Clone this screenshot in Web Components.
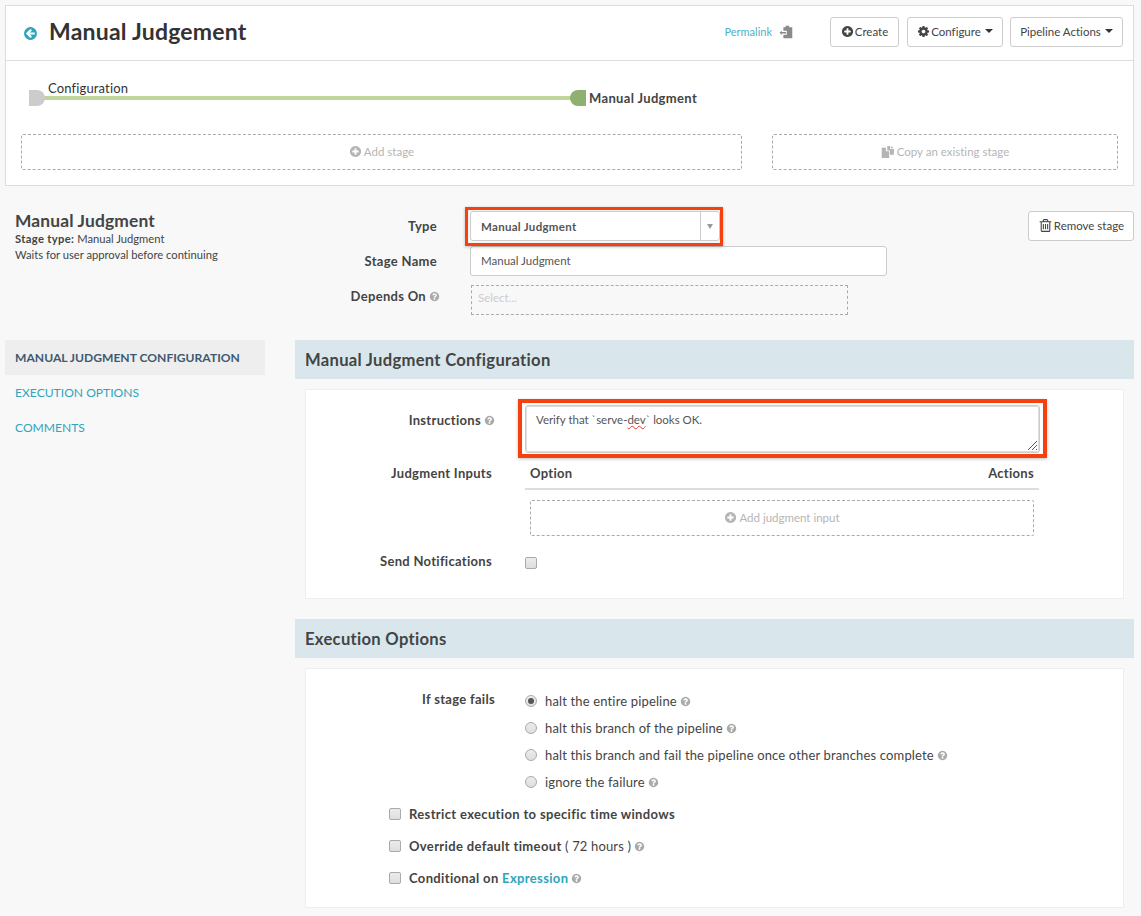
<!doctype html>
<html>
<head>
<meta charset="utf-8">
<title>Manual Judgement</title>
<style>
  html, body { margin: 0; padding: 0; background: #f8f8f8; }
  body { font-family: Lato, "Liberation Sans", sans-serif; font-size: 13px; color: #444; font-variant-ligatures: none; letter-spacing: .15px; }
</style>
</head>
<body>
<stage-page></stage-page>
<script>
const PATHS = {
  plus: 'M1344 960v-128q0-26-19-45t-45-19h-256v-256q0-26-19-45t-45-19h-128q-26 0-45 19t-19 45v256h-256q-26 0-45 19t-19 45v128q0 26 19 45t45 19h256v256q0 26 19 45t45 19h128q26 0 45-19t19-45v-256h256q26 0 45-19t19-45zm320-64q0 209-103 385.5t-279.5 279.5-385.5 103-385.5-103-279.5-279.5-103-385.5 103-385.5 279.5-279.5 385.5-103 385.5 103 279.5 279.5 103 385.5z',
  cog: 'M1152 896q0-106-75-181t-181-75-181 75-75 181 75 181 181 75 181-75 75-181zm512-109v222q0 12-8 23t-20 13l-185 28q-19 54-39 91 35 50 107 138 10 12 10 25t-9 23q-27 37-99 108t-94 71q-12 0-26-9l-138-108q-44 23-91 38-16 136-29 186-7 28-36 28h-222q-14 0-24.5-8.5t-11.5-21.5l-28-184q-49-16-90-37l-141 107q-10 9-25 9-14 0-25-11-126-114-165-168-7-10-7-23 0-12 8-23 15-21 51-66.5t54-70.5q-27-50-41-99l-183-27q-13-2-21-12.5t-8-23.5v-222q0-12 8-23t19-13l186-28q14-46 39-92-40-57-107-138-10-12-10-24 0-10 9-23 26-36 98.5-107.5t94.5-71.5q13 0 26 10l138 107q44-23 91-38 16-136 29-186 7-28 36-28h222q14 0 24.5 8.5t11.5 21.5l28 184q49 16 90 37l142-107q9-9 24-9 13 0 25 10 129 119 165 170 7 8 7 22 0 12-8 23-15 21-51 66.5t-54 70.5q26 50 41 98l183 28q13 2 21 12.5t8 23.5z',
  help: 'M1024 1376v-192q0-14-9-23t-23-9h-192q-14 0-23 9t-9 23v192q0 14 9 23t23 9h192q14 0 23-9t9-23zm256-672q0-88-55.5-163t-138.5-116-170-41q-243 0-371 213-15 24 8 42l132 100q7 6 19 6 16 0 25-12 53-68 86-92 34-24 86-24 48 0 85.5 26t37.5 59q0 38-20 61t-68 45q-63 28-115.5 86.5t-52.5 125.5v36q0 14 9 23t23 9h192q14 0 23-9t9-23q0-19 21.5-49.5t54.5-49.5q32-18 49-28.5t46-35 44.5-48 28-60.5 12.5-81zm384 192q0 209-103 385.5t-279.5 279.5-385.5 103-385.5-103-279.5-279.5-103-385.5 103-385.5 279.5-279.5 385.5-103 385.5 103 279.5 279.5 103 385.5z',
  back: 'M1408 960v-128q0-26-18.5-45t-45.5-19h-502l189-189q19-19 19-45t-19-45l-91-91q-18-18-45-18t-45 18l-362 362-91 91q-18 18-18 45t18 45l91 91 362 362q18 18 45 18t45-18l91-91q18-18 18-45t-18-45l-189-189h502q27 0 45.5-19t18.5-45zm256-64q0 209-103 385.5t-279.5 279.5-385.5 103-385.5-103-279.5-279.5-103-385.5 103-385.5 279.5-279.5 385.5-103 385.5 103 279.5 279.5 103 385.5z',
  trash: 'M704 736v576q0 14-9 23t-23 9h-64q-14 0-23-9t-9-23v-576q0-14 9-23t23-9h64q14 0 23 9t9 23zm256 0v576q0 14-9 23t-23 9h-64q-14 0-23-9t-9-23v-576q0-14 9-23t23-9h64q14 0 23 9t9 23zm256 0v576q0 14-9 23t-23 9h-64q-14 0-23-9t-9-23v-576q0-14 9-23t23-9h64q14 0 23 9t9 23zm128 724v-948h-896v948q0 22 7 40.5t14.5 27 10.5 8.5h832q3 0 10.5-8.5t14.5-27 7-40.5zm-672-1076h448l-48-117q-7-9-17-11h-317q-10 2-17 11zm928 32v64q0 14-9 23t-23 9h-96v948q0 83-47 143.5t-113 60.5h-832q-66 0-113-58.5t-47-141.5v-952h-96q-14 0-23-9t-9-23v-64q0-14 9-23t23-9h309l70-167q15-37 54-63t79-26h320q40 0 79 26t54 63l70 167h309q14 0 23 9t9 23z',
  copy: 'M90 350H640V800H1050V1650H90ZM800 130H1150V520H1650V1250H1150V700H800ZM1250 130 1650 430H1250Z',
  clip: 'M560 280H850V90H1300V280H1700V1700H560V1250H1000V750H560ZM60 1000 360 750V900H900V1100H360V1250Z'
}

class UiIcon extends HTMLElement {
  connectedCallback() {
    const size = this.getAttribute('size') || 12
    this.attachShadow({ mode: 'open' }).innerHTML = `<style>
      :host { display: inline-flex; color: inherit; }
      svg { display: block; width: ${size}px; height: ${size}px; fill: currentColor; }
    </style><svg viewBox="0 0 1792 1792"><path fill-rule="evenodd" d="${PATHS[this.getAttribute('name')]}"/></svg>`
  }
}
customElements.define('ui-icon', UiIcon)

class HelpTip extends HTMLElement {
  constructor() {
    super()
    this.attachShadow({ mode: 'open' }).innerHTML = `<style>
      :host { display: inline-flex; vertical-align: -1px; margin-left: 3px; color: #aaa; }
    </style><ui-icon name="help" size="11"></ui-icon>`
  }
}
customElements.define('help-tip', HelpTip)

class UiButton extends HTMLElement {
  constructor() {
    super()
    this.attachShadow({ mode: 'open' }).innerHTML = `<style>
      :host { display: inline-flex; align-items: center; justify-content: center; box-sizing: border-box;
        height: 30px; padding-bottom: 1px; background: #fff; border: 1px solid #ccc; border-radius: 3px; font-size: 11.5px; letter-spacing: 0; color: #444; gap: 1px; }
      .caret { width: 0; height: 0; border: 4px solid transparent; border-top-color: #333; border-bottom: 0; margin-left: 3px; }
      :host(:not([caret])) .caret { display: none; }
    </style><slot></slot><span class="caret"></span>`
  }
}
customElements.define('ui-button', UiButton)

class DashButton extends HTMLElement {
  constructor() {
    super()
    this.attachShadow({ mode: 'open' }).innerHTML = `<style>
      :host { display: flex; align-items: center; justify-content: center; gap: 2px; box-sizing: border-box;
        height: 36px; padding-bottom: 1px; border: 1px dashed #aaa; border-radius: 2px; color: #b5b5b5; font-size: 11.5px; letter-spacing: 0; }
    </style><slot></slot>`
  }
}
customElements.define('dash-button', DashButton)

class PipelineHeader extends HTMLElement {
  constructor() {
    super()
    this.attachShadow({ mode: 'open' }).innerHTML = `<style>
      :host { display: block; box-sizing: border-box; margin: 5px 7px 0 5px; height: 181px; background: #fff; border: 1px solid #ddd; }
      .top { display: flex; align-items: center; box-sizing: border-box; height: 55px; padding: 0 10px 3px 17px; border-bottom: 1px solid #ddd; }
      .back { color: #2fa4bd; display: flex; margin-right: 11px; margin-top: 3px; }
      h1 { margin: -2px 0 0; font-size: 23px; font-weight: 700; letter-spacing: .22px; color: #333; flex: 1; line-height: 30px; }
      .perma { color: #4eb0c6; font-size: 11px; letter-spacing: 0; margin-right: 7px; }
      .clip { color: #8a8a8a; display: flex; margin-right: 37px; }
      .btns { display: flex; }
      .create { width: 69px; margin-right: 8px; } .conf { width: 96px; margin-right: 7px; } .acts { width: 113px; }
      .graph { position: relative; height: 73px; }
      .start { position: absolute; left: 23px; top: 29px; width: 16px; height: 16px; background: #ccc; border-radius: 0 8px 8px 0; }
      .line { position: absolute; left: 38px; top: 35px; width: 527px; height: 4px; background: #bfd59a; }
      .end { position: absolute; left: 564px; top: 29px; width: 16px; height: 16px; background: #8fb06e; border-radius: 8px 0 0 8px; }
      .l1 { position: absolute; left: 42px; top: 19px; font-size: 13px; color: #333; line-height: 16px; }
      .l2 { position: absolute; left: 583px; top: 29px; font-size: 13px; font-weight: 700; letter-spacing: .35px; color: #444; line-height: 16px; }
      .adds { display: flex; gap: 30px; padding: 0 15px; }
      .adds dash-button:first-child { width: 721px; }
      .adds dash-button:last-child { width: 346px; }
    </style>
    <div class="top">
      <span class="back"><ui-icon name="back" size="15"></ui-icon></span>
      <h1>Manual Judgement</h1>
      <span class="perma">Permalink</span>
      <span class="clip"><ui-icon name="clip" size="14"></ui-icon></span>
      <div class="btns">
        <ui-button class="create"><ui-icon name="plus" size="13"></ui-icon>Create</ui-button>
        <ui-button class="conf" caret><ui-icon name="cog" size="13"></ui-icon>Configure</ui-button>
        <ui-button class="acts" caret>Pipeline Actions</ui-button>
      </div>
    </div>
    <div class="graph">
      <div class="line"></div><div class="start"></div><div class="end"></div>
      <div class="l1">Configuration</div>
      <div class="l2">Manual Judgment</div>
    </div>
    <div class="adds">
      <dash-button><ui-icon name="plus" size="13"></ui-icon>Add stage</dash-button>
      <dash-button><ui-icon name="copy" size="14"></ui-icon>Copy an existing stage</dash-button>
    </div>`
  }
}
customElements.define('pipeline-header', PipelineHeader)

class StageSummary extends HTMLElement {
  constructor() {
    super()
    this.attachShadow({ mode: 'open' }).innerHTML = `<style>
      :host { display: grid; grid-template-columns: 432px 250px 1fr; height: 154px; box-sizing: border-box; padding: 25px 7px 0 15px; }
      .info { grid-column: 1; grid-row: 1; z-index: 1; width: 300px; }
      .info h2 { margin: 0; font-size: 17.4px; font-weight: 700; color: #444; line-height: 20px; }
      .info div { font-size: 11.2px; line-height: 16px; letter-spacing: 0; color: #444; }
      .info b { letter-spacing: .35px; }
      .stack { grid-column: 1 / 3; grid-row: 1; display: grid; grid-template-columns: 455px 1fr; grid-auto-rows: 35px; }
      .lbl { box-sizing: border-box; padding-right: 33px; text-align: right; font-weight: 700; letter-spacing: .3px; color: #444; line-height: 30px; font-size: 13px; }
      .dep { padding-right: 30px; }
      .sel { box-sizing: border-box; width: 250px; height: 30px; background: #fff; border: 1px solid #ccc; border-radius: 3px; display: flex; align-items: center; position: relative; font-size: 11.5px; font-weight: 700; letter-spacing: .3px; color: #555; padding-left: 10px; }
      .sel::after { content: ""; position: absolute; top: -5px; right: -4px; bottom: -6px; left: -6px; border: 3px solid #f5400f; box-shadow: 0 1px 3px rgba(0,0,0,.25), inset 0 0 1px rgba(0,0,0,.2); }
      .sel .arrow { position: absolute; right: 0; top: 0; bottom: 0; width: 18px; border-left: 1px solid #ccc; display: flex; align-items: center; justify-content: center; }
      .sel .arrow i { width: 0; height: 0; border: 3px solid transparent; border-top: 5px solid #999; border-bottom: 0; }
      .inp { box-sizing: border-box; width: 417px; height: 30px; background: #fff; border: 1px solid #ccc; border-radius: 3px; font-size: 11.5px; letter-spacing: 0; color: #555; padding-left: 10px; line-height: 28px; }
      .ph { box-sizing: border-box; margin: 4px 0 0 1px; width: 377px; height: 30px; border: 1px dashed #aaa; font-size: 11.5px; letter-spacing: 0; color: #ccc; padding-left: 6px; line-height: 24px; }
      .side { grid-column: 3; grid-row: 1; justify-self: end; }
      .side ui-button { width: 106px; }
    </style>
    <div class="info">
      <h2>Manual Judgment</h2>
      <div><b>Stage type:</b> Manual Judgment</div>
      <div>Waits for user approval before continuing</div>
    </div>
    <div class="stack">
      <div class="lbl">Type</div><div class="sel">Manual Judgment<span class="arrow"><i></i></span></div>
      <div class="lbl">Stage Name</div><div class="inp">Manual Judgment</div>
      <div class="lbl dep">Depends On<help-tip></help-tip></div><div class="ph">Select...</div>
    </div>
    <div class="side"><ui-button><ui-icon name="trash" size="15"></ui-icon>Remove stage</ui-button></div>`
  }
}
customElements.define('stage-summary', StageSummary)

class SideNav extends HTMLElement {
  constructor() {
    super()
    this.attachShadow({ mode: 'open' }).innerHTML = `<style>
      :host { display: block; width: 260px; margin-left: 5px; font-size: 12.1px; letter-spacing: 0; }
      div { height: 35px; line-height: 35px; padding-left: 10px; color: #2fa4bd; }
      .on { background: #eee; color: #3e5a72; font-weight: 700; }
    </style>
    <div class="on">MANUAL JUDGMENT CONFIGURATION</div>
    <div>EXECUTION OPTIONS</div>
    <div>COMMENTS</div>`
  }
}
customElements.define('side-nav', SideNav)

class ConfigSection extends HTMLElement {
  constructor() {
    super()
    this.attachShadow({ mode: 'open' }).innerHTML = `<style>
      :host { display: block; }
      h3 { margin: 0; height: 39px; line-height: 40px; padding-left: 10px; background: #d9e7ec; font-size: 16.6px; letter-spacing: .3px; font-weight: 700; color: #444; }
      .panel { box-sizing: border-box; margin: 10px 10px 0; background: #fff; border: 1px solid #eee; height: var(--panel-height); }
    </style>
    <h3></h3><div class="panel"><slot></slot></div>`
    this.shadowRoot.querySelector('h3').textContent = this.getAttribute('heading')
  }
}
customElements.define('config-section', ConfigSection)

class TickBox extends HTMLElement {
  constructor() {
    super()
    this.attachShadow({ mode: 'open' }).innerHTML = `<style>
      :host { display: block; box-sizing: border-box; width: 12px; height: 12px; flex: none; background: linear-gradient(#ececec, #dedede); border: 1px solid #aaa; border-radius: 2px; }
      :host([round]) { border-radius: 50%; position: relative; }
      :host([checked])::after { content: ""; position: absolute; left: 2px; top: 2px; width: 6px; height: 6px; border-radius: 50%; background: #555; }
    </style>`
  }
}
customElements.define('tick-box', TickBox)

class JudgmentForm extends HTMLElement {
  constructor() {
    super()
    this.attachShadow({ mode: 'open' }).innerHTML = `<style>
      :host { display: grid; grid-template-columns: 186px 1fr; column-gap: 33px; padding-top: 15px; width: 733px; font-size: 13px; }
      .lbl { text-align: right; font-weight: 700; letter-spacing: .3px; color: #444; line-height: 30px; }
      .first { margin-right: -3px; }
      .ta { box-sizing: border-box; width: 515px; height: 48px; background: #fff; border: 1px solid #ccc; border-radius: 3px; padding: 6px 10px; font-size: 11.5px; letter-spacing: -.02px; line-height: 16px; color: #555; position: relative; box-shadow: inset 0 0 0 1px #ddd; }
      .ta::after { content: ""; position: absolute; top: -7px; right: -8px; bottom: -6px; left: -8px; border: 4px solid #f5400f; box-shadow: 0 1px 3px rgba(0,0,0,.25), inset 0 0 1px rgba(0,0,0,.2); }
      .ta u { text-decoration: underline wavy #e33; text-decoration-thickness: 1px; }
      .ta svg { position: absolute; right: 1px; bottom: 1px; }
      .head { display: flex; justify-content: space-between; width: 514px; box-sizing: border-box; padding: 0 5px; margin-top: 5px; height: 32px; line-height: 30px; font-weight: 700; letter-spacing: .3px; color: #444; border-bottom: 2px solid #ddd; }
      .add { margin: 10px 5px 0; width: 504px; }
      .lbl2 { margin-top: 5px; }
      .lbl3 { margin-top: 16px; line-height: 18px; }
      .tick { margin-top: 21px; }
    </style>
    <div class="lbl first">Instructions<help-tip></help-tip></div>
    <div class="ta">Verify that \`serve-<u>dev</u>\` looks OK.<svg width="11" height="11" viewBox="0 0 11 11" fill="none" stroke="#555"><path d="M1 10 10 1M5 10l5-5M9 10l1-1"/></svg></div>
    <div class="lbl lbl2">Judgment Inputs</div>
    <div>
      <div class="head"><span>Option</span><span>Actions</span></div>
      <dash-button class="add"><ui-icon name="plus" size="13"></ui-icon>Add judgment input</dash-button>
    </div>
    <div class="lbl lbl3">Send Notifications</div>
    <div><tick-box class="tick"></tick-box></div>`
  }
}
customElements.define('judgment-form', JudgmentForm)

class ExecutionForm extends HTMLElement {
  constructor() {
    super()
    this.attachShadow({ mode: 'open' }).innerHTML = `<style>
      :host { display: block; padding-top: 18px; font-size: 13px; color: #444; }
      .fail { display: grid; grid-template-columns: 189px 1fr; column-gap: 30px; }
      .lbl { text-align: right; font-weight: 700; letter-spacing: .3px; line-height: 24px; }
      .opt { display: flex; align-items: center; gap: 8px; height: 27px; }
      .chk { display: flex; align-items: center; gap: 8px; height: 32px; margin-left: 83px; }
      .opts { margin-bottom: 3px; }
      b { font-weight: 700; letter-spacing: .35px; }
      a { color: #2fa4bd; font-weight: 700; }
    </style>
    <div class="fail">
      <div class="lbl">If stage fails</div>
      <div class="opts">
        <div class="opt"><tick-box round checked></tick-box><span>halt the entire pipeline<help-tip></help-tip></span></div>
        <div class="opt"><tick-box round></tick-box><span>halt this branch of the pipeline<help-tip></help-tip></span></div>
        <div class="opt"><tick-box round></tick-box><span>halt this branch and fail the pipeline once other branches complete<help-tip></help-tip></span></div>
        <div class="opt"><tick-box round></tick-box><span>ignore the failure<help-tip></help-tip></span></div>
      </div>
    </div>
    <div class="chk"><tick-box></tick-box><b>Restrict execution to specific time windows</b></div>
    <div class="chk"><tick-box></tick-box><span><b>Override default timeout</b> ( 72 hours )<help-tip></help-tip></span></div>
    <div class="chk"><tick-box></tick-box><span><b>Conditional on <a>Expression</a></b><help-tip></help-tip></span></div>`
  }
}
customElements.define('execution-form', ExecutionForm)

class StagePage extends HTMLElement {
  constructor() {
    super()
    this.attachShadow({ mode: 'open' }).innerHTML = `<style>
      :host { display: block; height: 916px; overflow: hidden; }
      .body { display: grid; grid-template-columns: 265px 1fr; column-gap: 30px; padding-right: 7px; }
      .one { --panel-height: 210px; margin-bottom: 20px; }
      .two { --panel-height: 240px; }
    </style>
    <pipeline-header></pipeline-header>
    <stage-summary></stage-summary>
    <div class="body">
      <side-nav></side-nav>
      <div>
        <config-section class="one" heading="Manual Judgment Configuration"><judgment-form></judgment-form></config-section>
        <config-section class="two" heading="Execution Options"><execution-form></execution-form></config-section>
      </div>
    </div>`
  }
}
customElements.define('stage-page', StagePage)
</script>
</body>
</html>
